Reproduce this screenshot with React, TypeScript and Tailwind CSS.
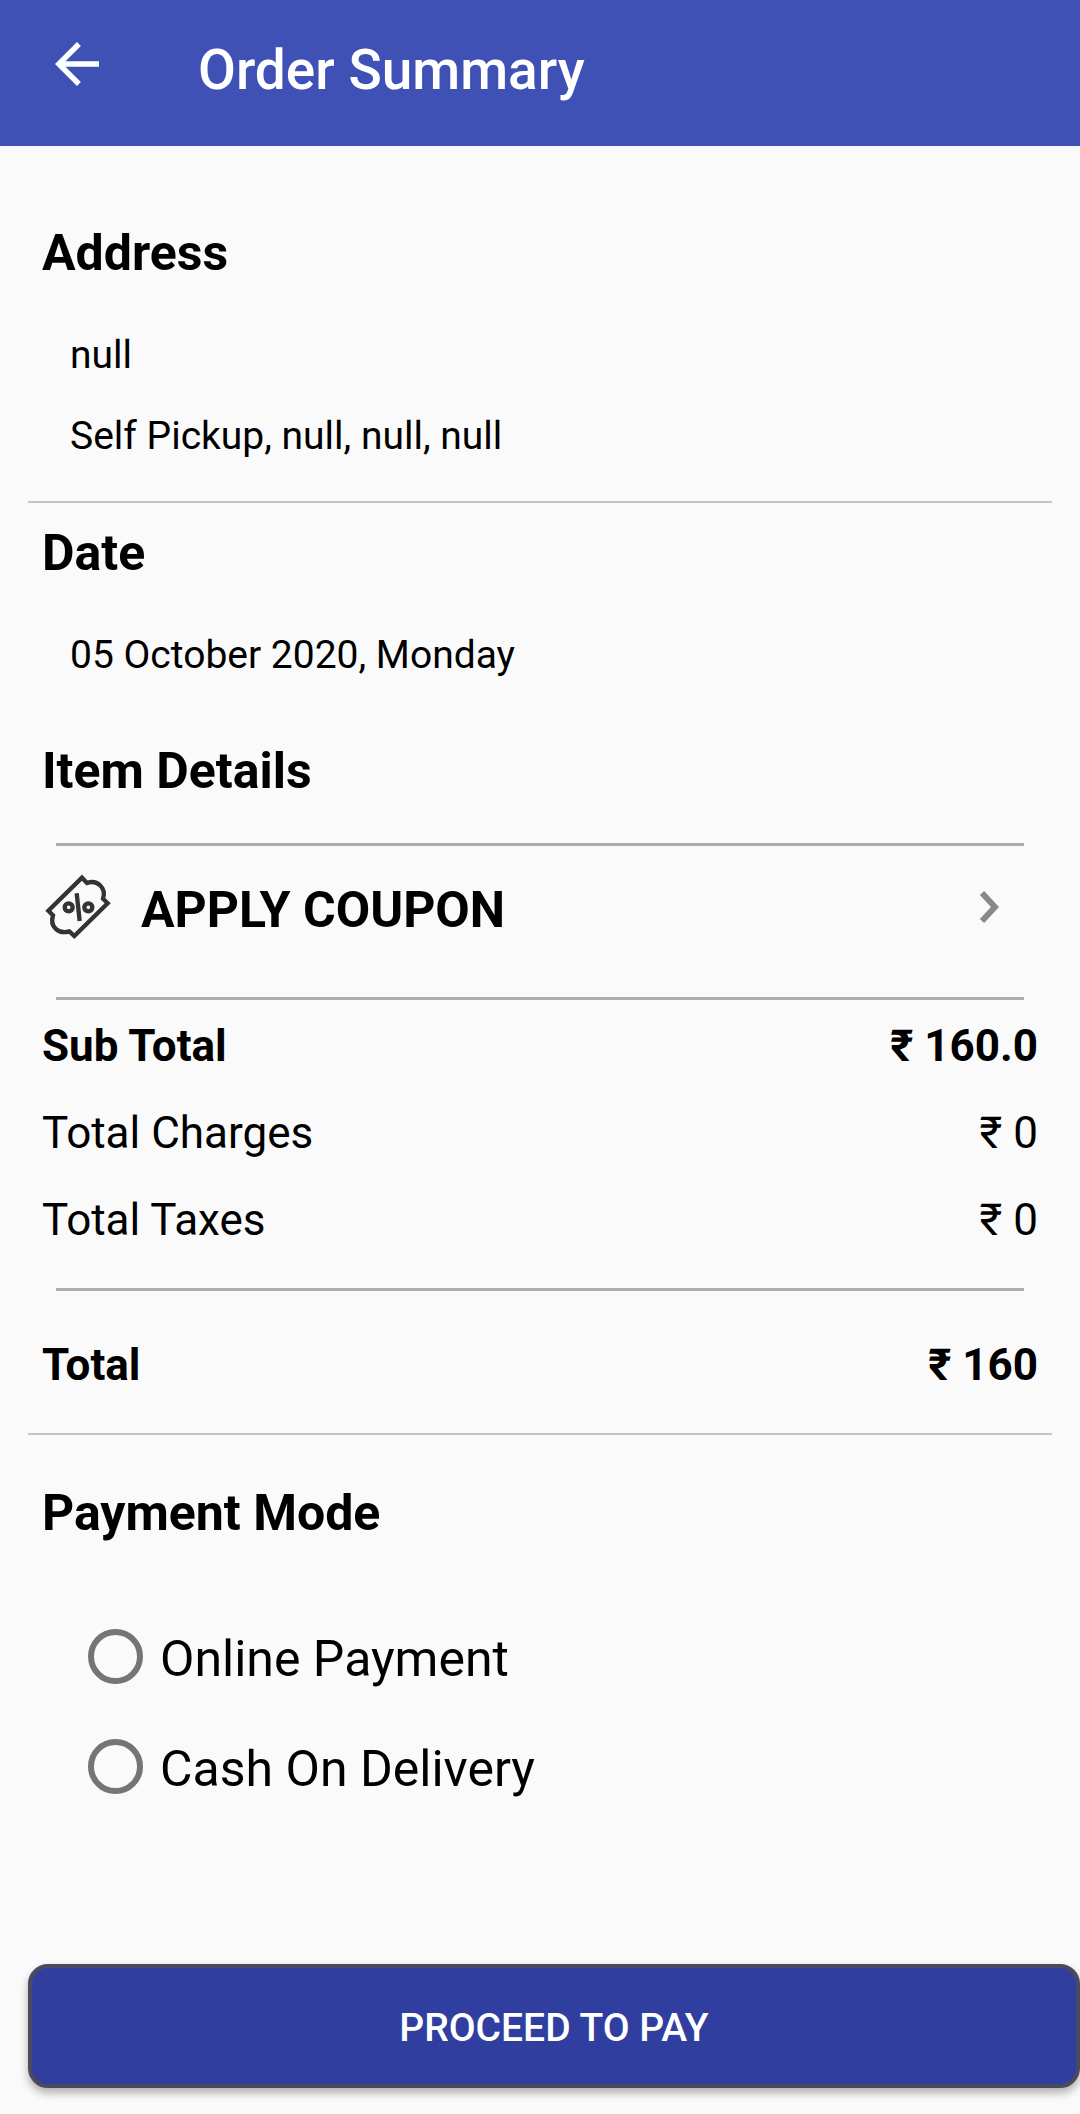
import { useState } from "react";
import type { ReactNode } from "react";

const charges = [
  { label: "Sub Total", amount: "₹ 160.0", bold: true },
  { label: "Total Charges", amount: "₹ 0", bold: false },
  { label: "Total Taxes", amount: "₹ 0", bold: false },
];

const paymentModes = [
  { id: "online", label: "Online Payment" },
  { id: "cod", label: "Cash On Delivery" },
];

function BackIcon() {
  return (
    <svg viewBox="0 0 24 24" className="size-[66px]" fill="currentColor" aria-hidden="true">
      <path d="M20 11H7.83l5.59-5.59L12 4l-8 8 8 8 1.41-1.41L7.83 13H20v-2z" />
    </svg>
  );
}

function CouponIcon() {
  return (
    <svg
      viewBox="40 40 204 204"
      className="size-[68px] shrink-0"
      fill="none"
      stroke="#333333"
      strokeWidth="13"
      aria-hidden="true"
    >
      <path d="M154 54L169 70C200 59 228 85 217 117L231 131L131 229L116 215C84 225 56 201 67 167L53 153Z" />
      <path d="M138 101L147 184" />
      <circle cx="114" cy="143" r="12" />
      <circle cx="173" cy="143" r="12" />
    </svg>
  );
}

function ChevronIcon() {
  return (
    <svg viewBox="0 0 20 34" className="mr-[53px] h-[34px] w-5" fill="none" aria-hidden="true">
      <path d="M3 3L16 17L3 31" stroke="#888888" strokeWidth="6" />
    </svg>
  );
}

function Heading({ children }: { children: ReactNode }) {
  return <h2 className="px-[14px] text-[50px] leading-[60px] font-bold">{children}</h2>;
}

function SectionDivider() {
  return <hr className="border-t-2 border-[#c4c4c4]" />;
}

function InnerDivider() {
  return <hr className="mx-7 border-t-[3px] border-[#adadad]" />;
}

function AmountRow({ label, amount, bold }: { label: string; amount: string; bold: boolean }) {
  return (
    <div
      className={`flex justify-between px-[14px] text-[44px] leading-[54px] ${
        bold ? "font-bold" : "font-normal"
      }`}
    >
      <dt>{label}</dt>
      <dd>{amount}</dd>
    </div>
  );
}

export default function App() {
  const [mode, setMode] = useState("");

  return (
    <div className="flex min-h-screen flex-col bg-[#fafafa] font-['Roboto',sans-serif] text-black">
      <header className="flex items-center gap-[88px] bg-[#3f51b5] px-11 pt-[25px] pb-[43px] text-white">
        <button type="button" aria-label="Back">
          <BackIcon />
        </button>
        <h1 className="pt-3 text-[55px] leading-[66px] font-medium">Order Summary</h1>
      </header>

      <main className="flex flex-1 flex-col pt-[77px] pb-[26px] pl-7">
        <div className="pr-7">
          <Heading>Address</Heading>
          <div className="mt-12 mb-[41px] flex flex-col gap-[33px] px-[42px] text-[39px] leading-[48px]">
            <p>null</p>
            <p>Self Pickup, null, null, null</p>
          </div>
          <SectionDivider />

          <div className="mt-5">
            <Heading>Date</Heading>
            <p className="mt-12 px-[42px] text-[39px] leading-[48px]">05 October 2020, Monday</p>
          </div>

          <div className="mt-[62px] mb-[42px]">
            <Heading>Item Details</Heading>
          </div>
          <InnerDivider />
          <button
            type="button"
            className="mt-[27px] mb-14 flex w-full items-center gap-[29px] pl-4 text-left"
          >
            <CouponIcon />
            <span className="flex-1 pt-[6px] text-[50px] leading-[60px] font-bold">
              APPLY COUPON
            </span>
            <ChevronIcon />
          </button>
          <InnerDivider />

          <dl className="mt-[19px] mb-[41px] flex flex-col gap-[33px]">
            {charges.map((row) => (
              <AmountRow key={row.label} {...row} />
            ))}
          </dl>
          <InnerDivider />
          <dl className="mt-[47px] mb-[41px]">
            <AmountRow label="Total" amount="₹ 160" bold />
          </dl>
          <SectionDivider />

          <fieldset className="mt-12">
            <legend>
              <Heading>Payment Mode</Heading>
            </legend>
            <div className="pt-[58px] pl-[60px]">
              {paymentModes.map(({ id, label }) => (
                <label
                  key={id}
                  className="flex h-[110px] items-center gap-[17px] text-[50px] leading-[60px]"
                >
                  <input
                    type="radio"
                    name="payment"
                    value={id}
                    checked={mode === id}
                    onChange={() => setMode(id)}
                    className="size-[55px] appearance-none rounded-full border-[6px] border-[#757575] checked:bg-[#3f51b5] checked:bg-clip-content checked:p-2"
                  />
                  <span className="pt-[6px]">{label}</span>
                </label>
              ))}
            </div>
          </fieldset>
        </div>

        <button
          type="button"
          className="mt-auto h-[124px] rounded-[20px] border-4 border-[#4a4a5e] bg-[#303f9f] pt-1 text-[39px] font-medium text-white shadow-[0_5px_8px_rgba(0,0,0,0.3)]"
        >
          PROCEED TO PAY
        </button>
      </main>
    </div>
  );
}
